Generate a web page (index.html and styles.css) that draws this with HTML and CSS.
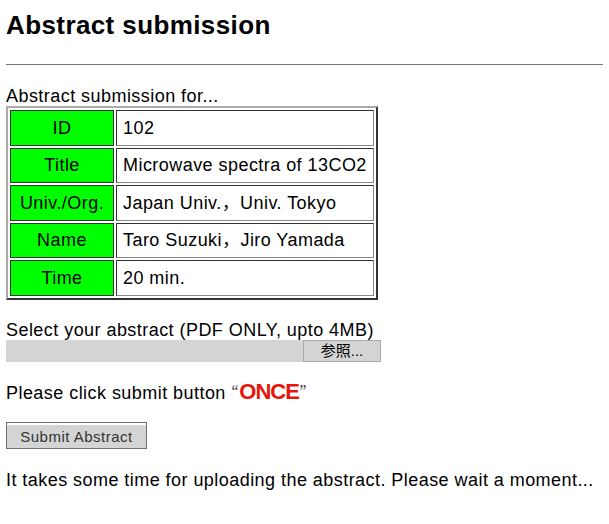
FILE: index.html
```html
<!DOCTYPE html>
<html lang="ja">
<head>
  <meta charset="UTF-8">
  <title>Abstract submission</title>
  <link rel="stylesheet" href="styles.css">
</head>
<body>

  <h2>Abstract submission</h2>
  <hr>

  <form id="abstractForm">
    <div class="intro">Abstract submission for...</div>
    <table class="info">
      <tr><th>ID</th><td>102</td></tr>
      <tr><th>Title</th><td>Microwave spectra of 13CO2</td></tr>
      <tr><th>Univ./Org.</th><td>Japan Univ.，Univ. Tokyo</td></tr>
      <tr><th>Name</th><td>Taro Suzuki，Jiro Yamada</td></tr>
      <tr><th>Time</th><td>20 min.</td></tr>
    </table>

    <div class="upload">
      <div class="upload-label">Select your abstract (PDF ONLY, upto 4MB)</div>
      <div class="file-box">
        <span class="file-name"></span>
        <span class="file-btn">参照...</span>
      </div>
    </div>

    <p class="notice">Please click submit button <span class="jq">“</span><span class="once">ONCE</span><span class="jq">”</span></p>

    <button type="submit" class="submit-btn">Submit Abstract</button>

    <p class="wait">It takes some time for uploading the abstract. Please wait a moment...</p>
  </form>

</body>
</html>
```

FILE: styles.css
```css
body {
  font-family: "Liberation Sans", "Noto Sans CJK JP", sans-serif;
  font-size: 18px;
  letter-spacing: 0.45px;
  line-height: 20px;
  color: #000;
  background: #fff;
  margin: 6px;
}

h2 {
  font-size: 26px;
  font-weight: bold;
  letter-spacing: 0.4px;
  line-height: 30px;
  margin: 4px 0 24px;
}

hr {
  margin: 0 0 22px;
  border: none;
  border-top: 1px solid #777;
}

.intro { line-height: 19px; }

.info {
  border: 2px solid;
  border-color: #aaa #333 #333 #aaa;
  border-spacing: 2px;
  margin-bottom: 21px;
}

.info th,
.info td {
  box-sizing: border-box;
  border: 1px solid;
  border-color: #333 #888 #888 #333;
  height: 35.5px;
  padding: 0 6px;
  font-weight: normal;
}

.info th {
  background: #00ff00;
  width: 104px;
  text-align: center;
  padding: 0 2px;
  border-color: #333;
}

.info td {
  width: 258px;
  background: #fff;
}

.upload-label { line-height: 19px; }

.file-box {
  display: flex;
  width: 375px;
  height: 22px;
  background: #d4d4d4;
}

.file-name { flex: 1; }

.file-btn {
  width: 76px;
  border: 1px solid #aaa;
  background: #d4d4d4;
  text-align: center;
  font-size: 15px;
  line-height: 20px;
  letter-spacing: 0;
}

.notice { margin: 21px 0 19px; }

.jq {
  font-family: "Noto Sans CJK JP", sans-serif;
  color: #444;
  font-size: 16px;
  line-height: 16px;
}

.once {
  color: #e8140c;
  font-weight: bold;
  font-size: 22px;
  line-height: 16px;
  letter-spacing: -1px;
}

.submit-btn {
  display: block;
  font-family: inherit;
  font-size: 15px;
  letter-spacing: 0.5px;
  color: #333;
  width: 141px;
  height: 27px;
  padding: 2px 0 0;
  background: #d4d4d4;
  border: 1px solid #707070;
  box-shadow: inset 0 2px 0 #fff;
}

.wait { margin: 21px 0; }
```
